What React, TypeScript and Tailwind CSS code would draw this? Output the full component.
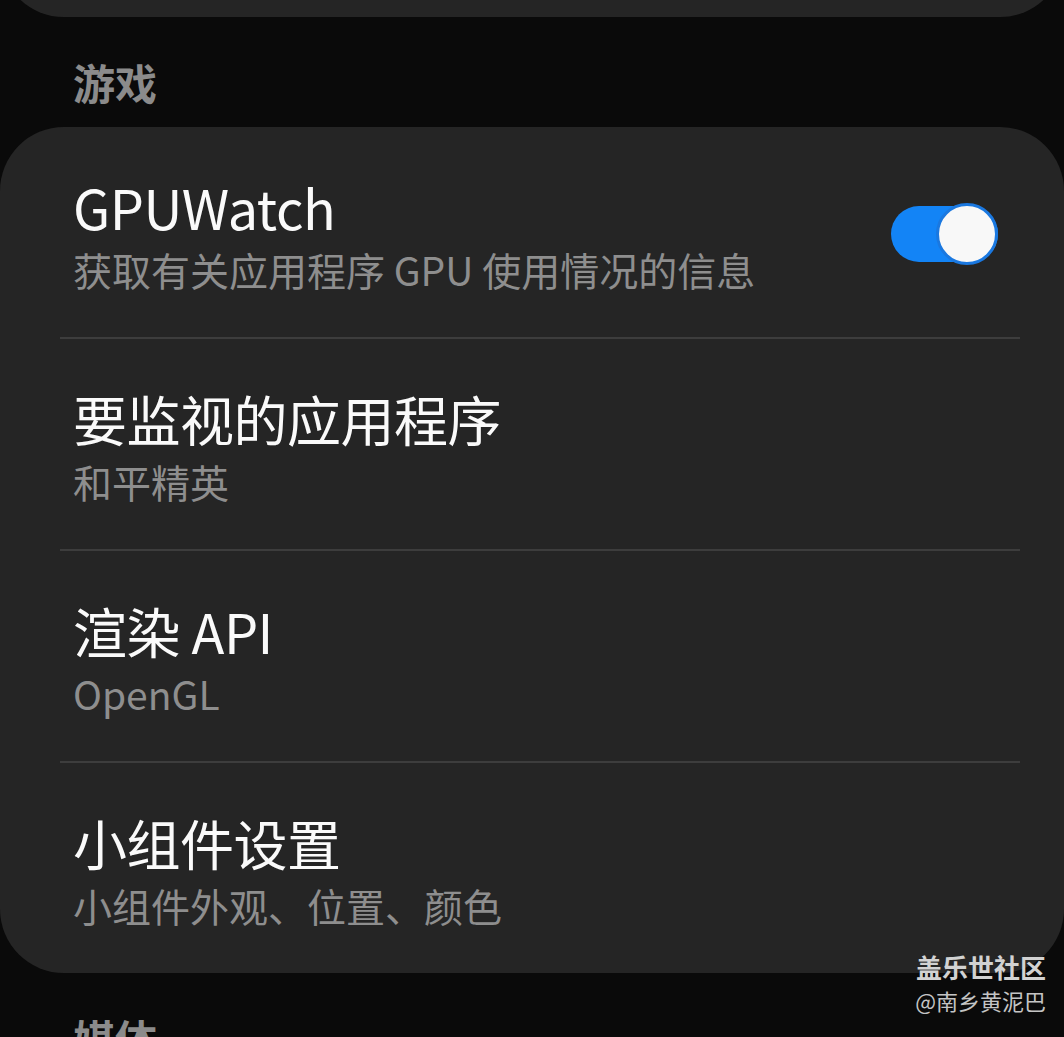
const font = {
  fontFamily: '"Noto Sans CJK SC", "Noto Sans", sans-serif',
};

type Row = { title: string; subtitle: string; toggle?: boolean };

const rows: Row[] = [
  { title: "GPUWatch", subtitle: "获取有关应用程序 GPU 使用情况的信息", toggle: true },
  { title: "要监视的应用程序", subtitle: "和平精英" },
  { title: "渲染 API", subtitle: "OpenGL" },
  { title: "小组件设置", subtitle: "小组件外观、位置、颜色" },
];

function Toggle() {
  return (
    <div className="relative mr-[66px] h-[56px] w-[107px] shrink-0">
      <div className="absolute inset-0 rounded-full bg-[#1384f6]" />
      <div className="absolute -top-[3px] right-0 h-[62px] w-[62px] rounded-full border-[3px] border-[#1a78e0] bg-[#f8f8f8]" />
    </div>
  );
}

function SectionHeader({ label }: { label: string }) {
  return (
    <div className="pl-[73px] pt-[40px] pb-[20px] text-[42px] font-bold leading-[50px] text-[#8b8b8b]">
      {label}
    </div>
  );
}

export default function App() {
  return (
    <div className="relative h-[1037px] overflow-hidden bg-[#0a0a0a]" style={font}>
      {/* previous card, only its bottom edge shows */}
      <div className="-mt-[83px] h-[100px] rounded-b-[64px] bg-[#252525]" />

      <SectionHeader label="游戏" />

      <div className="rounded-[64px] bg-[#252525]">
        {rows.map((row, i) => (
          <div key={row.title}>
            <div className="flex items-center pt-[45px] pb-[41px]">
              <div className="flex-1 pl-[73px]">
                <div className="text-[54px] leading-[70px] tracking-[-0.5px] text-[#fafafa]">
                  {row.title}
                </div>
                <div className="text-[39px] leading-[54px] text-[#8e8e8e]">{row.subtitle}</div>
              </div>
              {row.toggle && <Toggle />}
            </div>
            {i < rows.length - 1 && <div className="ml-[60px] mr-[44px] h-[2px] bg-[#3d3d3d]" />}
          </div>
        ))}
      </div>

      <SectionHeader label="媒体" />

      {/* watermark */}
      <div className="absolute right-[18px] top-[950px] flex flex-col items-end">
        <div className="text-[26px] font-bold leading-[34px] text-[#d2d2d2]">盖乐世社区</div>
        <div className="text-[22px] leading-[32px] text-[#c4c4c4]">@南乡黄泥巴</div>
      </div>
    </div>
  );
}
